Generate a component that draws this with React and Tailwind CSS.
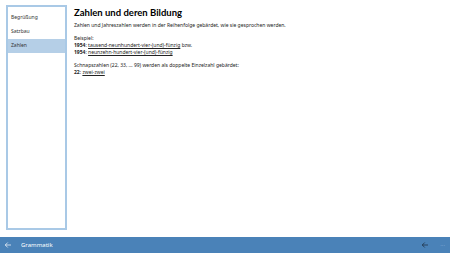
import React from "react";

const items = ["Begrüßung", "Satzbau", "Zahlen"];

const Arrow = ({ className }) => (
  <svg viewBox="0 0 16 16" className={className} fill="none" stroke="currentColor" strokeWidth="1.4">
    <path d="M14 8H2.5M7.5 3L2.5 8l5 5" />
  </svg>
);

export default function App() {
  const selected = "Zahlen";
  return (
    <div className="w-[450px] h-[253px] bg-white flex flex-col overflow-hidden" style={{ fontFamily: '"Noto Sans", "Open Sans", sans-serif' }}>
      <div className="flex flex-1 min-h-0 pt-[5px] pb-[7px]">
        <div className="ml-[6px] w-[61px] border-2 border-[#a9c9e6] flex flex-col pt-[4px]">
          {items.map((it) => (
            <div
              key={it}
              className={`h-[14px] flex items-center pl-[3px] text-[5px] text-[#333] ${
                it === selected ? "bg-[#b5cfe7]" : ""
              }`}
            >
              {it}
            </div>
          ))}
        </div>
        <div className="flex-1 pl-[7px] pt-[1px] text-[5px] leading-[7px] text-[#222]">
          <h1 className="text-[9.5px] leading-[14px] font-bold text-black mb-[2px] font-[Lato,sans-serif]">Zahlen und deren Bildung</h1>
          <p>Zahlen und Jahreszahlen werden in der Reihenfolge gebärdet, wie sie gesprochen werden.</p>
          <p className="mt-[6px]">Beispiel:</p>
          <p>
            <b>1954</b>: <span className="underline">tausend-neunhundert-vier-(und)-fünzig</span> bzw.
          </p>
          <p>
            <b>1954</b>: <span className="underline">neunzehn-hundert-vier-(und)-fünzig</span>
          </p>
          <p className="mt-[6px]">Schnapszahlen (22, 33, ... 99) werden als doppelte Einzelzahl gebärdet:</p>
          <p>
            <b>22</b>: <span className="underline">zwei-zwei</span>
          </p>
        </div>
      </div>
      <div className="h-[16px] bg-[#4a82b8] flex items-center text-white">
        <Arrow className="w-[8px] h-[8px] ml-[4px]" />
        <span className="ml-[9px] text-[6px]">Grammatik</span>
        <div className="flex-1" />
        <Arrow className="w-[8px] h-[8px] text-[#1a2a3a]" />
        <span className="ml-[11px] mr-[5px] text-[6px] text-[#9bbbe0] leading-none">···</span>
      </div>
    </div>
  );
}
